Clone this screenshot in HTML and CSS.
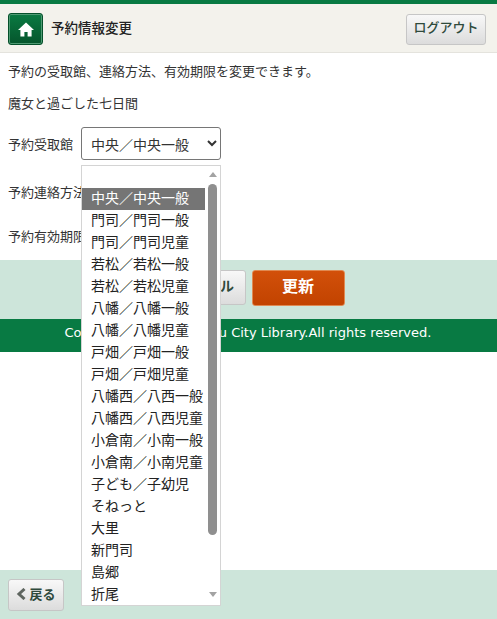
FILE: index.html
```html
<!DOCTYPE html>
<html lang="ja">
<head>
    <meta charset="UTF-8">
    <meta name="viewport" content="width=device-width, initial-scale=1.0">
    <title>予約情報変更</title>
    <link rel="stylesheet" href="styles.css">
</head>
<body>
    <header class="header">
        <div class="header-left">
            <a class="home-button" href="#" aria-label="ホーム">
                <svg width="16" height="15" viewBox="0 0 16 15"><path d="M8 .5 0 8h2.4v6.5h4V10h3.2v4.5h4V8H16z" fill="#fff"/></svg>
            </a>
            <h1 class="page-title">予約情報変更</h1>
        </div>
        <button class="btn logout-button" type="button">ログアウト</button>
    </header>

    <main class="content">
        <p class="lead">予約の受取館、連絡方法、有効期限を変更できます。</p>
        <p class="book-title">魔女と過ごした七日間</p>

        <div class="form-row first-row">
            <label class="form-label" for="branch">予約受取館</label>
            <div class="select-wrap">
                <select class="form-select" id="branch">
                    <option>中央／中央一般</option>
                </select>

                <!-- opened list, lies over the rows below -->
                <div class="dropdown">
                    <ul class="dropdown-list">
                        <li class="dropdown-item selected">中央／中央一般</li>
                        <li class="dropdown-item">門司／門司一般</li>
                        <li class="dropdown-item">門司／門司児童</li>
                        <li class="dropdown-item">若松／若松一般</li>
                        <li class="dropdown-item">若松／若松児童</li>
                        <li class="dropdown-item">八幡／八幡一般</li>
                        <li class="dropdown-item">八幡／八幡児童</li>
                        <li class="dropdown-item">戸畑／戸畑一般</li>
                        <li class="dropdown-item">戸畑／戸畑児童</li>
                        <li class="dropdown-item">八幡西／八西一般</li>
                        <li class="dropdown-item">八幡西／八西児童</li>
                        <li class="dropdown-item">小倉南／小南一般</li>
                        <li class="dropdown-item">小倉南／小南児童</li>
                        <li class="dropdown-item">子ども／子幼児</li>
                        <li class="dropdown-item">そねっと</li>
                        <li class="dropdown-item">大里</li>
                        <li class="dropdown-item">新門司</li>
                        <li class="dropdown-item">島郷</li>
                        <li class="dropdown-item">折尾</li>
                    </ul>
                    <div class="scrollbar">
                        <span class="arrow-up"></span>
                        <span class="thumb"></span>
                        <span class="arrow-down"></span>
                    </div>
                </div>
            </div>
        </div>
        <div class="form-row second-row">
            <span class="form-label">予約連絡方法</span>
        </div>
        <div class="form-row">
            <span class="form-label">予約有効期限</span>
        </div>
    </main>

    <div class="action-band">
        <button class="btn cancel-button" type="button">キャンセル</button>
        <button class="btn update-button" type="button">更新</button>
    </div>

    <footer class="copyright">Copyright (C) Kitakyushu City Library.All rights reserved.</footer>

    <div class="bottom-band">
        <button class="btn back-button" type="button">
            <svg width="11" height="12" viewBox="0 0 11 12"><path d="M8.5 1 3 6l5.5 5" fill="none" stroke="#5f6660" stroke-width="3"/></svg>
            戻る
        </button>
    </div>
</body>
</html>
```

FILE: styles.css
```css
* {
    box-sizing: border-box;
}

html, body {
    height: 100%;
}

body {
    margin: 0;
    display: flex;
    flex-direction: column;
    height: 619px;
    overflow: hidden;
    background-color: #fff;
    color: #333;
    font-family: "Noto Sans CJK JP", sans-serif;
    font-size: 13px;
}

/* Header */
.header {
    display: flex;
    justify-content: space-between;
    align-items: center;
    height: 53px;
    padding: 2px 11px 0 8px;
    background-color: #f3f2ec;
    border-top: 4px solid #087a43;
    border-bottom: 1px solid #e4e3dd;
}

.header-left {
    display: flex;
    align-items: center;
    gap: 8px;
}

.home-button {
    display: flex;
    justify-content: center;
    align-items: center;
    width: 35px;
    height: 32px;
    background: linear-gradient(#0a7a42, #05552c);
    border: 1px solid #04502a;
    border-radius: 3px;
    box-shadow: inset 0 0 0 1px #4f9a73;
}

.page-title {
    margin: 0;
    padding-bottom: 5px;
    font-size: 13.5px;
    font-weight: 500;
    color: #222;
}

.btn {
    font-family: inherit;
    border-radius: 3px;
    cursor: pointer;
}

.logout-button {
    width: 80px;
    height: 31px;
    padding: 0 0 5px;
    font-size: 13px;
    font-weight: 500;
    color: #2f4a3c;
    background: linear-gradient(#f8f8f8, #dcdcdc);
    border: 1px solid #c6c6c6;
}

/* Form */
.content {
    height: 207px;
    padding: 0 8px;
}

.lead {
    margin: 8px 0 0;
    line-height: 20px;
}

.book-title {
    margin: 12px 0 0;
    line-height: 20px;
}

.form-row {
    display: flex;
    align-items: center;
    height: 44px;
}

.first-row {
    margin-top: 14px;
    height: 33px;
}

.second-row {
    margin-top: 9px;
}

.form-label {
    width: 73px;
    flex-shrink: 0;
    white-space: nowrap;
}

.select-wrap {
    position: relative;
}

.form-select {
    display: block;
    width: 140px;
    height: 33px;
    padding: 0 4px 0 5px;
    font-family: inherit;
    font-size: 14px;
    color: #333;
    background-color: #fff;
    border: 1px solid #767676;
    border-radius: 3px;
}

/* Opened select list */
.dropdown {
    position: absolute;
    top: 38px;
    left: 0;
    z-index: 5;
    display: flex;
    width: 140px;
    height: 441px;
    background-color: #fff;
    border: 1px solid #d4d4d4;
}

.dropdown-list {
    width: 123px;
    margin: 22px 0 0;
    padding: 0;
    list-style: none;
}

.dropdown-item {
    height: 22px;
    padding-left: 9px;
    font-size: 14px;
    line-height: 19px;
    white-space: nowrap;
    color: #222;
}

.dropdown-item.selected {
    background-color: #757575;
    color: #fff;
}

.scrollbar {
    position: relative;
    display: flex;
    flex-direction: column;
    align-items: center;
    width: 15px;
    padding-top: 6px;
    background-color: #fff;
}

.arrow-up {
    border-left: 4px solid transparent;
    border-right: 4px solid transparent;
    border-bottom: 5px solid #a3a3a3;
}

.thumb {
    width: 9px;
    height: 351px;
    margin-top: 7px;
    background-color: #8f8f8f;
    border-radius: 5px;
}

.arrow-down {
    margin-top: 57px;
    border-left: 4px solid transparent;
    border-right: 4px solid transparent;
    border-top: 5px solid #a3a3a3;
}

/* Bands */
.action-band {
    display: flex;
    justify-content: center;
    align-items: center;
    gap: 6px;
    height: 59px;
    padding-bottom: 4px;
    background-color: #cde5da;
}

.cancel-button {
    width: 93px;
    height: 35px;
    padding: 0 0 5px;
    font-size: 14px;
    font-weight: 700;
    color: #2f4a3c;
    background: linear-gradient(#f8f8f8, #dcdcdc);
    border: 1px solid #c6c6c6;
}

.update-button {
    width: 93px;
    height: 36px;
    padding: 0 0 6px;
    font-size: 16px;
    font-weight: 700;
    color: #fff;
    background: linear-gradient(#d2500a, #c24300);
    border: 1px solid #e08a52;
}

.copyright {
    height: 33px;
    padding-right: 1px;
    font-family: "DejaVu Sans", sans-serif;
    font-size: 13px;
    line-height: 28px;
    text-align: center;
    color: #fff;
    background-color: #087a43;
}

.bottom-band {
    display: flex;
    align-items: center;
    height: 49px;
    margin-top: auto;
    padding: 1px 8px 0;
    background-color: #cde5da;
}

.back-button {
    display: flex;
    justify-content: center;
    align-items: center;
    gap: 2px;
    width: 56px;
    height: 32px;
    padding: 0 0 3px;
    font-size: 13px;
    font-weight: 700;
    color: #2f4a3c;
    background: linear-gradient(#f8f8f8, #dcdcdc);
    border: 1px solid #c6c6c6;
}
```
